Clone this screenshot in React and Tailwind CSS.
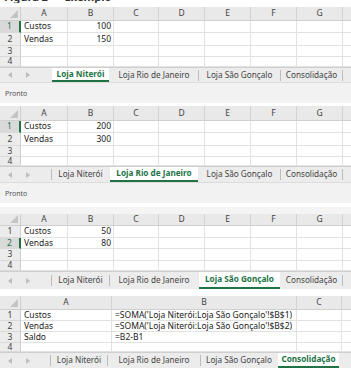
import React from 'react';

const TABS = ['Loja Niterói', 'Loja Rio de Janeiro', 'Loja São Gonçalo', 'Consolidação'];
const LETTERS = ['A', 'B', 'C', 'D', 'E', 'F', 'G'];

function Corner({ w }) {
  return (
    <div className={`${w} shrink-0 h-full flex items-end justify-end pr-[2px] pb-[2px] border-r border-[#d0d0d0]`}>
      <svg width="8" height="8" viewBox="0 0 8 8">
        <path d="M8 0 L8 8 L0 8 Z" fill="#c4c4c4" />
      </svg>
    </div>
  );
}

function HeaderRow({ cols, labels, h }) {
  return (
    <div className={`flex ${h} bg-[#e9e9e9] border-b border-[#cfcfcf] text-[#444]`}>
      <Corner w={cols[0]} />
      {labels.map((l, i) => (
        <div key={l} className={`${cols[i + 1]} shrink-0 flex items-center justify-center border-r border-[#d4d4d4]`}>
          {l}
        </div>
      ))}
      <div className="flex-1" />
    </div>
  );
}

function BodyRow({ cols, num, cells, h, sel, align }) {
  return (
    <div className={`flex ${h} overflow-hidden`}>
      <div
        className={`${cols[0]} shrink-0 flex items-center justify-center border-b border-[#dadada] ${
          sel ? 'bg-[#d9d9d9] text-[#217346] border-r-2 border-r-[#217346]' : 'bg-[#ececec] text-[#444] border-r border-r-[#cfcfcf]'
        }`}
      >
        {num}
      </div>
      {cols.slice(1).map((c, i) => (
        <div
          key={i}
          className={`${c} shrink-0 flex items-center border-r border-b border-[#e2e2e2] whitespace-nowrap overflow-visible ${
            align[i] === 'r' ? 'justify-end pr-[2px]' : 'justify-start pl-[3px]'
          } text-[#222]`}
        >
          {cells[i] || ''}
        </div>
      ))}
      <div className="flex-1 border-b border-[#e2e2e2]" />
    </div>
  );
}

function TabBar({ active, widths, h, left }) {
  return (
    <div className={`flex ${h} bg-[#ececec] border-t border-[#cfcfcf] text-[#444] text-[8.2px]`}>
      <div className={`${left} shrink-0 flex items-center pl-[8px] gap-[14px] text-[#bdbdbd]`}>
        <svg width="4" height="6" viewBox="0 0 4 6">
          <path d="M4 0 L0 3 L4 6 Z" fill="currentColor" />
        </svg>
        <svg width="4" height="6" viewBox="0 0 4 6">
          <path d="M0 0 L4 3 L0 6 Z" fill="currentColor" />
        </svg>
      </div>
      {TABS.map((t, i) => {
        const isA = i === active;
        const showSep = !isA && i - 1 !== active;
        return (
          <div key={t} className={`${widths[i]} shrink-0 flex items-stretch`}>
            {showSep ? (
              <div className="self-center w-px h-[11px] bg-[#bcbcbc]" />
            ) : (
              <div className="w-px" />
            )}
            {isA ? (
              <div className="flex-1 flex items-center justify-center bg-white font-bold text-[#217346] border-b-2 border-[#217346] whitespace-nowrap">
                {t}
              </div>
            ) : (
              <div className="flex-1 flex items-center justify-center whitespace-nowrap">{t}</div>
            )}
          </div>
        );
      })}
      <div className="flex-1 flex items-stretch">
        {active !== 3 ? <div className="self-center w-px h-[11px] bg-[#bcbcbc]" /> : null}
      </div>
    </div>
  );
}

function StatusBar() {
  return (
    <div className="h-[21px] bg-[#f2f2f2] border-t border-[#dcdcdc] flex items-center pl-[5px] text-[7px] text-[#555]">
      Pronto
    </div>
  );
}

const COLS7 = ['w-[21px]', 'w-[47px]', 'w-[46px]', 'w-[45px]', 'w-[46px]', 'w-[46px]', 'w-[46px]', 'w-[46px]'];
const ALIGN7 = ['l', 'r', 'l', 'l', 'l', 'l', 'l'];
const TABW = ['w-[58px]', 'w-[89px]', 'w-[82px]', 'w-[62px]'];

function StoreSheet({ v1, v2, sel, active, status, headerH, rowHs, row4H, tabH, pre }) {
  const rows = [
    ['Custos', v1],
    ['Vendas', v2],
    ['', ''],
    ['', ''],
  ];
  return (
    <div className="flex flex-col">
      {pre}
      <HeaderRow cols={COLS7} labels={LETTERS} h={headerH} />
      {rows.map((r, i) => (
        <BodyRow
          key={i}
          cols={COLS7}
          num={String(i + 1)}
          cells={[r[0], r[1]]}
          h={i < 3 ? rowHs[i] : row4H}
          sel={sel === i}
          align={ALIGN7}
        />
      ))}
      <TabBar active={active} widths={TABW} h={tabH} left="w-[51px]" />
      {status ? <StatusBar /> : null}
    </div>
  );
}

const COLS4 = ['w-[21px]', 'w-[91px]', 'w-[185px]', 'w-[45px]'];
const ALIGN4 = ['l', 'l', 'l'];

export default function App() {
  return (
    <div className="w-[351px] h-[372px] overflow-hidden bg-white text-[8.5px] leading-none font-['Noto_Sans','Open_Sans',sans-serif]">
      <StoreSheet
        v1="100"
        v2="150"
        sel={0}
        active={0}
        status
        headerH="h-[14px]"
        rowHs={['h-[12px]', 'h-[13px]', 'h-[11px]']}
        row4H="h-[10px]"
        tabH="h-[15px]"
        pre={
          <div className="h-[7px] bg-white">
            <div className="h-[3px] overflow-hidden">
              <div className="-mt-[9px] pl-[4px] text-[11px] font-bold text-[#333] leading-[12px] whitespace-nowrap">Figura 2 — Exemplo</div>
            </div>
          </div>
        }
      />
      <div className="h-[3px] bg-white" />
      <StoreSheet
        v1="200"
        v2="300"
        sel={0}
        active={1}
        status
        headerH="h-[15px]"
        rowHs={['h-[12px]', 'h-[13px]', 'h-[11px]']}
        row4H="h-[9px]"
        tabH="h-[16px]"
      />
      <div className="h-[4px] bg-white" />
      <StoreSheet
        v1="50"
        v2="80"
        sel={1}
        active={2}
        headerH="h-[12px]"
        rowHs={['h-[12px]', 'h-[11px]', 'h-[12px]']}
        row4H="h-[10px]"
        tabH="h-[18px]"
        pre={<div className="h-[7px] bg-[#f4f4f4]" />}
      />
      <div className="h-[7px] bg-white" />
      <div className="flex flex-col">
        <HeaderRow cols={COLS4} labels={['A', 'B', 'C']} h="h-[14px]" />
        <BodyRow cols={COLS4} num="1" cells={['Custos', "=SOMA('Loja Niterói:Loja São Gonçalo'!$B$1)"]} h="h-[11px]" align={ALIGN4} />
        <BodyRow cols={COLS4} num="2" cells={['Vendas', "=SOMA('Loja Niterói:Loja São Gonçalo'!$B$2)"]} h="h-[11px]" align={ALIGN4} />
        <BodyRow cols={COLS4} num="3" cells={['Saldo', '=B2-B1']} h="h-[11px]" align={ALIGN4} />
        <BodyRow cols={COLS4} num="4" cells={['', '']} h="h-[9px]" align={ALIGN4} />
        <TabBar active={3} widths={['w-[57px]', 'w-[93px]', 'w-[77px]', 'w-[62px]']} h="h-[16px]" left="w-[50px]" />
      </div>
    </div>
  );
}
